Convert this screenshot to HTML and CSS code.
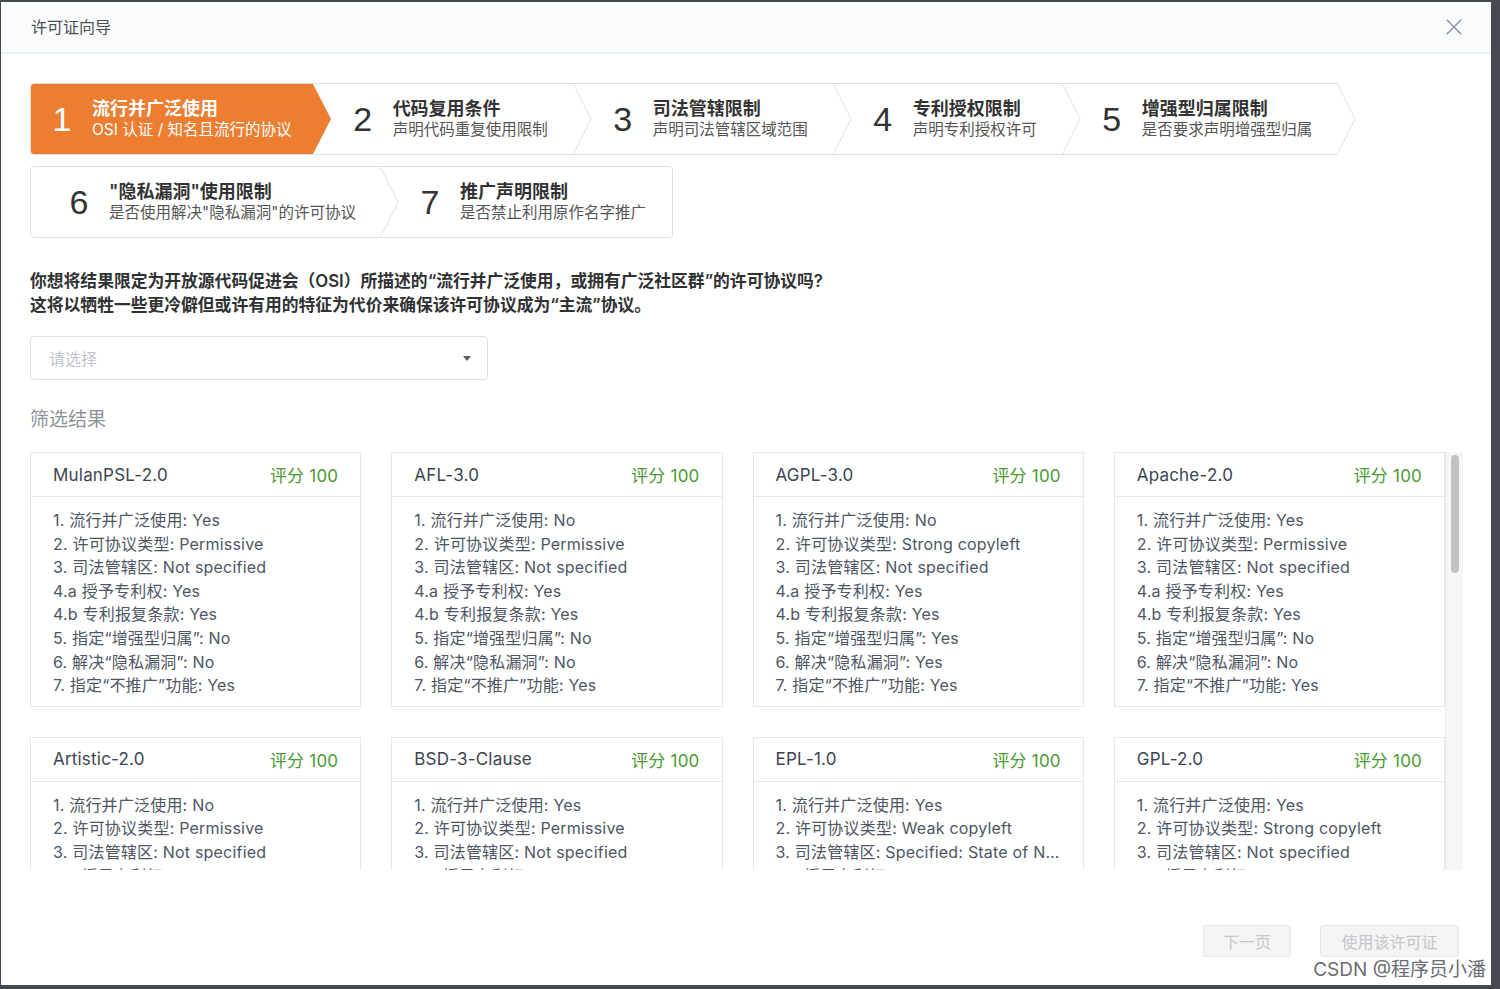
FILE: index.html
```html
<!DOCTYPE html>
<html lang="zh-CN">
<head>
<meta charset="utf-8">
<title>许可证向导</title>
<link rel="stylesheet" href="styles.css">
</head>
<body>
<div class="modal">
  <header class="modal-head">
    <span class="modal-title">许可证向导</span>
    <button class="close" aria-label="关闭"><svg width="16" height="16" viewBox="0 0 16 16"><path d="M0.8 0.8L15.2 15.2M15.2 0.8L0.8 15.2" stroke="#8d9ba8" stroke-width="1.6" fill="none"/></svg></button>
  </header>

  <div class="modal-body">
    <div class="step-row open">
      <div class="step active first">
        <span class="num">1</span>
        <div class="txt"><div class="t">流行并广泛使用</div><div class="s">OSI 认证 / 知名且流行的协议</div></div>
        <svg class="chev" viewBox="0 0 18 72" preserveAspectRatio="none"><polygon points="0,1 18,36 0,71" fill="#ec7d31"/></svg>
      </div>
      <div class="step">
        <span class="num">2</span>
        <div class="txt"><div class="t">代码复用条件</div><div class="s">声明代码重复使用限制</div></div>
        <svg class="chev" viewBox="0 0 18 72" preserveAspectRatio="none"><polygon points="0,0 18,36 0,72" fill="#fff"/><polyline points="0,0 18,36 0,72" fill="none" stroke="#dfe2e6" stroke-width="1"/></svg>
      </div>
      <div class="step">
        <span class="num">3</span>
        <div class="txt"><div class="t">司法管辖限制</div><div class="s">声明司法管辖区域范围</div></div>
        <svg class="chev" viewBox="0 0 18 72" preserveAspectRatio="none"><polygon points="0,0 18,36 0,72" fill="#fff"/><polyline points="0,0 18,36 0,72" fill="none" stroke="#dfe2e6" stroke-width="1"/></svg>
      </div>
      <div class="step">
        <span class="num">4</span>
        <div class="txt"><div class="t">专利授权限制</div><div class="s">声明专利授权许可</div></div>
        <svg class="chev" viewBox="0 0 18 72" preserveAspectRatio="none"><polygon points="0,0 18,36 0,72" fill="#fff"/><polyline points="0,0 18,36 0,72" fill="none" stroke="#dfe2e6" stroke-width="1"/></svg>
      </div>
      <div class="step row-end">
        <span class="num">5</span>
        <div class="txt"><div class="t">增强型归属限制</div><div class="s">是否要求声明增强型归属</div></div>
        <svg class="chev" viewBox="0 0 18 72" preserveAspectRatio="none"><polygon points="0,0 18,36 0,72" fill="#fff"/><polyline points="0,0 18,36 0,72" fill="none" stroke="#dfe2e6" stroke-width="1"/></svg>
      </div>
    </div>

    <div class="step-row closed">
      <div class="step first second-row">
        <span class="num">6</span>
        <div class="txt"><div class="t">"隐私漏洞"使用限制</div><div class="s">是否使用解决"隐私漏洞"的许可协议</div></div>
        <svg class="chev" viewBox="0 0 18 72" preserveAspectRatio="none"><polygon points="0,0 18,36 0,72" fill="#fff"/><polyline points="0,0 18,36 0,72" fill="none" stroke="#dfe2e6" stroke-width="1"/></svg>
      </div>
      <div class="step last-step">
        <span class="num">7</span>
        <div class="txt"><div class="t">推广声明限制</div><div class="s">是否禁止利用原作名字推广</div></div>
      </div>
    </div>

    <p class="question">你想将结果限定为开放源代码促进会（OSI）所描述的“流行并广泛使用，或拥有广泛社区群”的许可协议吗?<br>这将以牺牲一些更冷僻但或许有用的特征为代价来确保该许可协议成为“主流”协议。</p>

    <div class="select"><span class="placeholder">请选择</span><span class="caret"></span></div>

    <div class="result-label">筛选结果</div>

    <div class="results">
      <div class="scroll-area">
        <div class="grid">
          <div class="card"><div class="card-head"><span class="name">MulanPSL-2.0</span><span class="score">评分 100</span></div><div class="card-body">
            <div class="line">1. 流行并广泛使用: Yes</div><div class="line">2. 许可协议类型: Permissive</div><div class="line">3. 司法管辖区: Not specified</div><div class="line">4.a 授予专利权: Yes</div><div class="line">4.b 专利报复条款: Yes</div><div class="line">5. 指定“增强型归属”: No</div><div class="line">6. 解决“隐私漏洞”: No</div><div class="line">7. 指定“不推广”功能: Yes</div></div></div>
          <div class="card"><div class="card-head"><span class="name">AFL-3.0</span><span class="score">评分 100</span></div><div class="card-body">
            <div class="line">1. 流行并广泛使用: No</div><div class="line">2. 许可协议类型: Permissive</div><div class="line">3. 司法管辖区: Not specified</div><div class="line">4.a 授予专利权: Yes</div><div class="line">4.b 专利报复条款: Yes</div><div class="line">5. 指定“增强型归属”: No</div><div class="line">6. 解决“隐私漏洞”: No</div><div class="line">7. 指定“不推广”功能: Yes</div></div></div>
          <div class="card"><div class="card-head"><span class="name">AGPL-3.0</span><span class="score">评分 100</span></div><div class="card-body">
            <div class="line">1. 流行并广泛使用: No</div><div class="line">2. 许可协议类型: Strong copyleft</div><div class="line">3. 司法管辖区: Not specified</div><div class="line">4.a 授予专利权: Yes</div><div class="line">4.b 专利报复条款: Yes</div><div class="line">5. 指定“增强型归属”: Yes</div><div class="line">6. 解决“隐私漏洞”: Yes</div><div class="line">7. 指定“不推广”功能: Yes</div></div></div>
          <div class="card"><div class="card-head"><span class="name">Apache-2.0</span><span class="score">评分 100</span></div><div class="card-body">
            <div class="line">1. 流行并广泛使用: Yes</div><div class="line">2. 许可协议类型: Permissive</div><div class="line">3. 司法管辖区: Not specified</div><div class="line">4.a 授予专利权: Yes</div><div class="line">4.b 专利报复条款: Yes</div><div class="line">5. 指定“增强型归属”: No</div><div class="line">6. 解决“隐私漏洞”: No</div><div class="line">7. 指定“不推广”功能: Yes</div></div></div>

          <div class="card"><div class="card-head"><span class="name">Artistic-2.0</span><span class="score">评分 100</span></div><div class="card-body">
            <div class="line">1. 流行并广泛使用: No</div><div class="line">2. 许可协议类型: Permissive</div><div class="line">3. 司法管辖区: Not specified</div><div class="line">4.a 授予专利权: Yes</div></div></div>
          <div class="card"><div class="card-head"><span class="name">BSD-3-Clause</span><span class="score">评分 100</span></div><div class="card-body">
            <div class="line">1. 流行并广泛使用: Yes</div><div class="line">2. 许可协议类型: Permissive</div><div class="line">3. 司法管辖区: Not specified</div><div class="line">4.a 授予专利权: No</div></div></div>
          <div class="card"><div class="card-head"><span class="name">EPL-1.0</span><span class="score">评分 100</span></div><div class="card-body">
            <div class="line">1. 流行并广泛使用: Yes</div><div class="line">2. 许可协议类型: Weak copyleft</div><div class="line">3. 司法管辖区: Specified: State of New York and the United States</div><div class="line">4.a 授予专利权: Yes</div></div></div>
          <div class="card"><div class="card-head"><span class="name">GPL-2.0</span><span class="score">评分 100</span></div><div class="card-body">
            <div class="line">1. 流行并广泛使用: Yes</div><div class="line">2. 许可协议类型: Strong copyleft</div><div class="line">3. 司法管辖区: Not specified</div><div class="line">4.a 授予专利权: No</div></div></div>
        </div>
      </div>
      <div class="scrollbar"><div class="thumb"></div></div>
    </div>
  </div>

  <footer class="modal-foot">
    <button class="btn" disabled>下一页</button>
    <button class="btn wide" disabled>使用该许可证</button>
  </footer>

  <span class="watermark">CSDN @程序员小潘</span>
</div>
</body>
</html>
```

FILE: styles.css
```css
* { box-sizing: border-box; }

html, body {
  margin: 0;
  height: 100%;
}

body {
  background: #46494f;
  font-family: Inter, "Noto Sans CJK SC", sans-serif;
  color: #333;
  overflow: hidden;
}

.modal {
  position: relative;
  margin: 2px 9px 0 1px;
  height: 983px;
  background: #fff;
  display: flex;
  flex-direction: column;
}

.modal-head {
  flex: none;
  height: 52px;
  background: #fafbfc;
  border-bottom: 2px solid #e8edf2;
  display: flex;
  align-items: center;
  justify-content: space-between;
  padding: 0 29px 0 30px;
}

.modal-title {
  font-size: 16px;
  color: #4b4f56;
  line-height: 22px;
}

.close {
  border: 0;
  background: none;
  padding: 0;
  width: 16px;
  height: 16px;
  display: flex;
}

.modal-body {
  flex: none;
  padding: 29px 28px 0 29px;
}

/* steps */
.step-row {
  display: flex;
  width: max-content;
  height: 72px;
  border: 1px solid #dcdfe6;
  border-radius: 4px;
}
.step-row.open {
  border-right: 0;
  border-radius: 4px 0 0 4px;
}
.step-row.closed {
  margin-top: 11px;
}

.step {
  position: relative;
  display: flex;
  align-items: center;
  padding: 0 25px 0 39px;
  background: #fff;
}
.step.first {
  padding-left: 20px;
  padding-right: 21px;
  border-radius: 3px 0 0 3px;
}
.step.second-row {
  padding-left: 37px;
  padding-right: 24px;
}
.step.row-end {
  padding-right: 25px;
}
.step.last-step {
  padding-right: 26px;
  border-radius: 0 3px 3px 0;
}

.num {
  width: 22px;
  margin-right: 19px;
  text-align: center;
  font-family: "Liberation Sans", Inter, sans-serif;
  font-size: 34px;
  line-height: 40px;
  color: #333;
}

.txt .t {
  font-size: 18px;
  line-height: 22px;
  font-weight: 600;
  color: #333;
  white-space: nowrap;
}
.txt .s {
  font-size: 15.5px;
  line-height: 20px;
  color: #555;
  white-space: nowrap;
}

.step.active {
  background: #ec7d31;
}
.step.active .num,
.step.active .t,
.step.active .s {
  color: #fff;
}

.chev {
  position: absolute;
  top: -1px;
  right: -18px;
  width: 18px;
  height: 72px;
  z-index: 2;
  overflow: visible;
}

/* question */
.question {
  margin: 31px 0 0;
  font-size: 16.8px;
  line-height: 24px;
  font-weight: 600;
  color: #303133;
}

.select {
  margin-top: 19px;
  width: 458px;
  height: 44px;
  border: 1px solid #dcdfe6;
  border-radius: 4px;
  display: flex;
  align-items: center;
  justify-content: space-between;
  padding: 0 16px 0 18px;
}
.placeholder {
  font-size: 16px;
  color: #c0c4cc;
}
.caret {
  width: 0;
  height: 0;
  border-left: 4px solid transparent;
  border-right: 4px solid transparent;
  border-top: 5px solid #5a5e66;
}

.result-label {
  margin-top: 27px;
  font-size: 19px;
  line-height: 26px;
  color: #8e9399;
}

/* results */
.results {
  margin-top: 19px;
  width: 1433px;
  height: 418px;
  display: flex;
}
.scroll-area {
  flex: none;
  width: 1415px;
  height: 418px;
  overflow: hidden;
}
.scrollbar {
  flex: none;
  width: 18px;
  background: #f6f6f6;
  border-left: 1px solid #eeeeee;
  padding: 3px 4px 0 5px;
}
.thumb {
  height: 118px;
  border-radius: 4px;
  background: #c2c2c2;
}

.grid {
  display: grid;
  grid-template-columns: repeat(4, 1fr);
  gap: 30px;
}

.card {
  border: 1px solid #e3e8ee;
  min-width: 0;
}
.card-head {
  height: 44px;
  border-bottom: 1px solid #e3e8ee;
  display: flex;
  align-items: center;
  justify-content: space-between;
  padding: 0 22px;
  font-size: 17px;
  letter-spacing: 0.2px;
}
.name {
  color: #3d4451;
}
.score {
  color: #4a9a32;
}
.card-body {
  padding: 12px 21px 8px 22px;
  font-size: 16px;
  line-height: 23.6px;
  letter-spacing: 0.2px;
  color: #4e5664;
}
.line {
  white-space: nowrap;
  overflow: hidden;
  text-overflow: ellipsis;
}

/* footer */
.modal-foot {
  flex: 1;
  display: flex;
  justify-content: flex-end;
  align-items: flex-start;
  gap: 29px;
  padding: 55px 32px 0 0;
}
.btn {
  height: 32px;
  width: 88px;
  border: 1px solid #e4e6ea;
  background: #f4f4f5;
  border-radius: 3px;
  font-family: Inter, "Noto Sans CJK SC", sans-serif;
  font-size: 16px;
  color: #c4c6cb;
  padding: 0;
}
.btn.wide {
  width: 139px;
}

.watermark {
  position: absolute;
  right: 5px;
  bottom: 3px;
  font-size: 19px;
  line-height: 24px;
  color: #6a6d72;
  text-shadow: 0 0 2px #fff;
  white-space: nowrap;
}
```
